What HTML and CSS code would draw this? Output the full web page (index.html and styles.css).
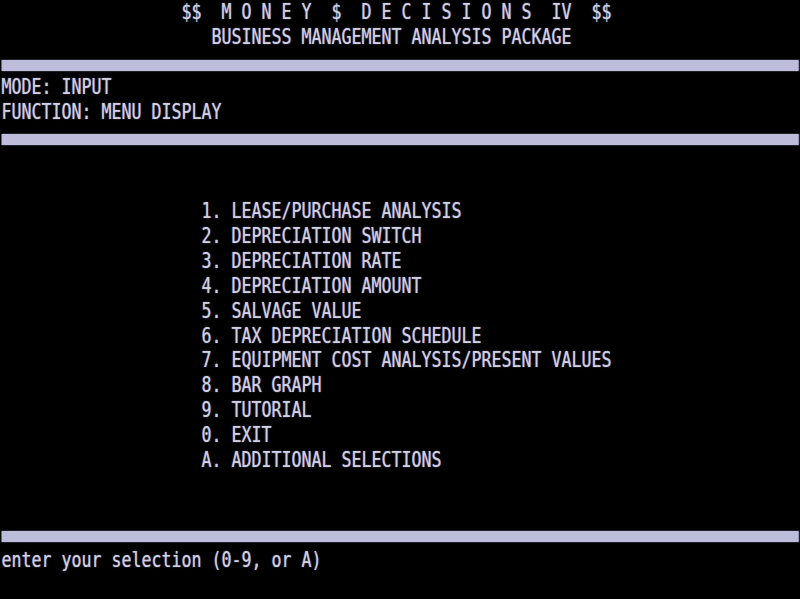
FILE: index.html
```html
<!DOCTYPE html>
<html lang="en">
<head>
<meta charset="utf-8">
<title>Money Decisions IV</title>
<link rel="stylesheet" href="styles.css">
</head>
<body>
<div class="frame">
<div class="screen">
  <div class="row indent-18">$$  M O N E Y  $  D E C I S I O N S  IV  $$</div>
  <div class="row indent-21">BUSINESS MANAGEMENT ANALYSIS PACKAGE</div>
  <div class="row"><div class="bar"></div></div>
  <div class="row">MODE: INPUT</div>
  <div class="row">FUNCTION: MENU DISPLAY</div>
  <div class="row"><div class="bar"></div></div>
  <div class="row"></div>
  <div class="row"></div>
  <div class="menu">
    <div class="row indent-20">1. LEASE/PURCHASE ANALYSIS</div>
    <div class="row indent-20">2. DEPRECIATION SWITCH</div>
    <div class="row indent-20">3. DEPRECIATION RATE</div>
    <div class="row indent-20">4. DEPRECIATION AMOUNT</div>
    <div class="row indent-20">5. SALVAGE VALUE</div>
    <div class="row indent-20">6. TAX DEPRECIATION SCHEDULE</div>
    <div class="row indent-20">7. EQUIPMENT COST ANALYSIS/PRESENT VALUES</div>
    <div class="row indent-20">8. BAR GRAPH</div>
    <div class="row indent-20">9. TUTORIAL</div>
    <div class="row indent-20">0. EXIT</div>
    <div class="row indent-20">A. ADDITIONAL SELECTIONS</div>
  </div>
  <div class="row"></div>
  <div class="row"></div>
  <div class="row"><div class="bar bar-low"></div></div>
  <div class="row">enter your selection (0-9, or A)</div>
  <div class="row"></div>
</div>
</div>
</body>
</html>
```
FILE: styles.css
```css
html, body {
  margin: 0;
  padding: 0;
  background: #000;
  overflow: hidden;
}

.frame {
  width: 800px;
  height: 599px;
  overflow: hidden;
}

.screen {
  width: 1025.8px;
  height: 599px;
  transform: scaleX(0.7798);
  transform-origin: 0 0;
  font-family: "DejaVu Sans Mono", "Liberation Mono", monospace;
  font-size: 21.3px;
  color: #cfcfe6;
  text-shadow: 0 0 1.5px rgba(205, 205, 235, 0.75);
  box-sizing: border-box;
  padding: 0 0 0 2px;
}

.row {
  height: 24.9px;
  line-height: 24.9px;
  white-space: pre;
  display: flex;
  flex-direction: column;
}

.indent-18 { padding-left: 18ch; }
.indent-20 { padding-left: 20ch; }
.indent-21 { padding-left: 21ch; }

.bar {
  margin: 10px 2px 0 0;
  height: 11px;
  background: #bdbddb;
  box-shadow: 0 0 1.5px #8a8aa8;
}

.bar-low {
  margin-top: 8px;
}
```
